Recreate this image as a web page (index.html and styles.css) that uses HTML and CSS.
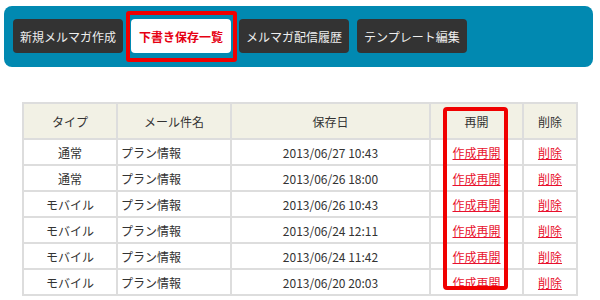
FILE: index.html
```html
<!DOCTYPE html>
<html lang="ja">
<head>
<meta charset="utf-8">
<link rel="stylesheet" href="styles.css">
</head>
<body>
<nav class="menu">
  <a class="btn">新規メルマガ作成</a>
  <a class="btn active">下書き保存一覧</a>
  <a class="btn">メルマガ配信履歴</a>
  <a class="btn">テンプレート編集</a>
</nav>
<div class="table-wrap">
  <table class="list">
    <colgroup>
      <col class="c1"><col class="c2"><col class="c3"><col class="c4"><col class="c5">
    </colgroup>
    <thead>
      <tr><th>タイプ</th><th>メール件名</th><th>保存日</th><th>再開</th><th>削除</th></tr>
    </thead>
    <tbody>
      <tr><td>通常</td><td class="name">プラン情報</td><td>2013/06/27 10:43</td><td><a href="#">作成再開</a></td><td><a href="#">削除</a></td></tr>
      <tr><td>通常</td><td class="name">プラン情報</td><td>2013/06/26 18:00</td><td><a href="#">作成再開</a></td><td><a href="#">削除</a></td></tr>
      <tr><td>モバイル</td><td class="name">プラン情報</td><td>2013/06/26 10:43</td><td><a href="#">作成再開</a></td><td><a href="#">削除</a></td></tr>
      <tr><td>モバイル</td><td class="name">プラン情報</td><td>2013/06/24 12:11</td><td><a href="#">作成再開</a></td><td><a href="#">削除</a></td></tr>
      <tr><td>モバイル</td><td class="name">プラン情報</td><td>2013/06/24 11:42</td><td><a href="#">作成再開</a></td><td><a href="#">削除</a></td></tr>
      <tr><td>モバイル</td><td class="name">プラン情報</td><td>2013/06/20 20:03</td><td><a href="#">作成再開</a></td><td><a href="#">削除</a></td></tr>
    </tbody>
  </table>
  <div class="col-highlight"></div>
</div>
</body>
</html>
```
FILE: styles.css
```css
html, body {
  margin: 0;
  padding: 0;
  background: #fff;
  font-family: "Noto Sans CJK JP", "Noto Sans", sans-serif;
  color: #333;
}

.menu {
  margin: 6px 0 0 4px;
  width: 589px;
  height: 61px;
  box-sizing: border-box;
  padding: 13px 0 0 9px;
  background: #0189b1;
  border-radius: 8px;
  display: flex;
  align-items: flex-start;
  gap: 8px;
}

.btn {
  position: relative;
  display: flex;
  align-items: center;
  justify-content: center;
  height: 34px;
  padding: 0 7px;
  background: #333333;
  color: #eeeeee;
  font-size: 12px;
  border-radius: 4px;
  white-space: nowrap;
}

.btn.active {
  background: #ffffff;
  color: #e60012;
  font-weight: bold;
  padding: 0 8px;
}

.btn.active::after {
  content: "";
  position: absolute;
  top: -8px;
  bottom: -9px;
  left: -5px;
  right: -6px;
  border: 4px solid #f00000;
  border-radius: 3px;
}

.table-wrap {
  position: relative;
  margin: 35px 0 0 22px;
  width: 554px;
}

.list {
  width: 554px;
  border-collapse: collapse;
  table-layout: fixed;
  font-size: 12px;
}

.c1 { width: 94px; }
.c2 { width: 114px; }
.c3 { width: 199px; }
.c4 { width: 93px; }
.c5 { width: 54px; }

.list th,
.list td {
  border: 2px solid #dddddd;
  text-align: center;
  padding: 0;
  color: #333;
}

.list th {
  height: 34px;
  background: #f2f1e5;
  font-weight: normal;
}

.list td {
  height: 24px;
}

.list td.name {
  text-align: left;
  padding-left: 3px;
}

.list a {
  color: #e8112d;
  text-decoration: underline;
}

.col-highlight {
  position: absolute;
  left: 421px;
  top: 5px;
  width: 65px;
  height: 183px;
  box-sizing: border-box;
  border: 4px solid #f00000;
  border-radius: 4px;
}
```
